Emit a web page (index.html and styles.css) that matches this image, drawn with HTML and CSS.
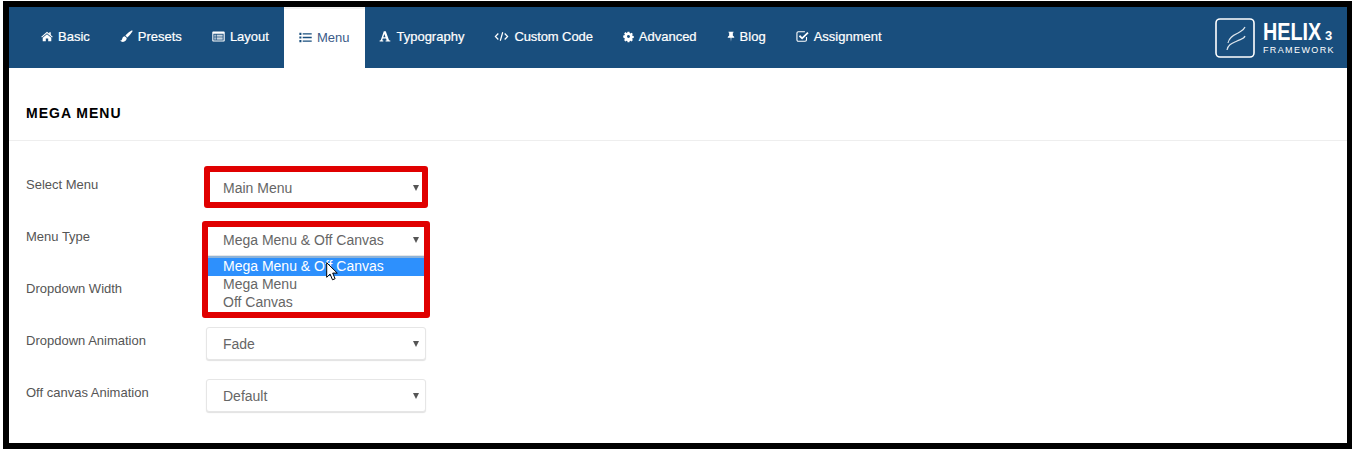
FILE: index.html
```html
<!DOCTYPE html>
<html lang="en">
<head>
    <meta charset="UTF-8">
    <meta name="viewport" content="width=device-width, initial-scale=1.0">
    <title>Helix3 Framework - Menu</title>
    <link rel="stylesheet" href="styles.css">
</head>
<body>
    <div class="frame">
        <nav class="topbar">
            <ul class="tabs">
                <li class="tab">
                    <svg class="icon icon-12" viewBox="0 0 14 14"><path d="M7 1.600 0.300 7.200l.8.900L7 3.200l5.900 4.900.8-.9-2.300-1.900V2H9.600v1.600zM2 8.400 7 4.300l5 4.100v4.100H8.400V9.200H5.600v3.300H2z"/></svg>
                    Basic
                </li>
                <li class="tab">
                    <svg class="icon" viewBox="0 0 14 14"><path d="M13.400.6c.5.500-.4 1.700-1.800 3.500C10.200 5.900 8.900 7.300 7.900 8.100L5.800 6c.8-1 2.200-2.400 4-3.800C11.600.9 13 .1 13.400.6zM5.200 6.600l2.100 2.100c-.1 2.400-1.900 4.200-4.200 4.200-1.100 0-2.300-.5-3.100-1.500 1.500 0 2.100-.6 2.400-2 .3-1.600 1.300-2.700 2.800-2.800z"/></svg>
                    Presets
                </li>
                <li class="tab">
                    <svg class="icon" viewBox="0 0 14 12"><path fill-rule="evenodd" d="M1.200.5h11.600c.5 0 .9.400.9.900v9.200c0 .5-.4.900-.9.900H1.200c-.5 0-.9-.4-.9-.9V1.400c0-.5.400-.9.900-.9zM1.500 3v7.300h11V3zM2.500 4h1.600v1.100H2.500zM5 4h6.500v1.100H5zM2.500 6h1.600v1.100H2.500zM5 6h6.500v1.100H5zM2.500 8h1.600v1.100H2.500zM5 8h6.500v1.100H5z"/></svg>
                    Layout
                </li>
                <li class="tab tab-active">
                    <svg class="icon" viewBox="0 0 14 12"><path d="M.4 1h2.200v2.200H.4zM.4 4.900h2.200v2.200H.4zM.4 8.800h2.200V11H.4zM4 1.400h9.700v1.400H4zM4 5.300h9.700v1.400H4zM4 9.200h9.700v1.400H4z"/></svg>
                    Menu
                </li>
                <li class="tab">
                    <svg class="icon icon-12" viewBox="0 0 14 14"><path d="M5.600 1h2.300l3.600 9.900c.2.600.6.800 1.700.9v1H7.700v-1c1 0 1.300-.2 1.100-.8l-.6-1.800H4.500l-.6 1.700c-.2.700.1.900 1.100.9v1H.7v-1c.9-.1 1.300-.3 1.500-.9zM6.300 4 5 7.800h2.600z"/></svg>
                    Typography
                </li>
                <li class="tab tab-tight">
                    <svg class="icon-line icon-15" viewBox="0 0 16 12"><path stroke-width="1.300" d="M4.600 2.800 1.500 6l3.100 3.200M11.400 2.800 14.500 6l-3.100 3.200M9.300 1.500 6.700 10.500"/></svg>
                    Custom Code
                </li>
                <li class="tab">
                    <svg class="icon icon-11" viewBox="0 0 14 14"><path fill-rule="evenodd" d="M5.800 1h2.400l.3 1.700 1 .4 1.400-1 1.700 1.700-1 1.400.4 1 1.700.3v2.400l-1.700.3-.4 1 1 1.400-1.700 1.700-1.400-1-1 .4-.3 1.700H5.800l-.3-1.700-1-.4-1.400 1-1.700-1.700 1-1.400-.4-1L.3 8.200V5.800L2 5.500l.4-1-1-1.400 1.700-1.700 1.400 1 1-.4zM7 5.100a1.900 1.900 0 1 0 0 3.800 1.900 1.900 0 0 0 0-3.800z"/></svg>
                    Advanced
                </li>
                <li class="tab">
                    <svg class="icon icon-8" viewBox="0 0 10 14"><path d="M1.800 1h6.400v1H7.300v4.200c1 .4 1.800 1.300 1.800 2.400H5.500L5 13.500l-.5-4.900H.9c0-1.100.8-2 1.800-2.400V2h-.9z"/></svg>
                    Blog
                </li>
                <li class="tab">
                    <svg class="icon-line" viewBox="0 0 14 14"><path stroke-width="1.200" d="M11.300 7.500v3c0 1-.6 1.600-1.600 1.600H2.600c-1 0-1.600-.6-1.600-1.600V3.500c0-1 .6-1.600 1.600-1.600h7"/><path stroke-width="1.900" d="M3.700 6.200 6.600 9l6.300-6.300"/></svg>
                    Assignment
                </li>
            </ul>
            <div class="logo">
                <svg class="logo-mark" viewBox="0 0 40 40" fill="none" stroke="#fff">
                    <rect x="1" y="1" width="38" height="38" rx="4" stroke-width="1.600"/>
                    <path stroke-width="1.200" stroke-opacity="0.85" d="M13 25c1-6 6-8 10-10 3-2 6-3 7-6"/>
                    <path stroke-width="1.200" stroke-opacity="0.85" d="M12 32c1-6 6-7 10-9 4-2 7-2 8-5"/>
                </svg>
                <div class="logo-text">
                    <div class="logo-name"><span class="logo-word">HELIX</span><span class="logo-ver">3</span></div>
                    <div class="logo-sub">FRAMEWORK</div>
                </div>
            </div>
        </nav>

        <main class="panel">
            <h1 class="panel-title">MEGA MENU</h1>
            <form class="settings">
                <div class="field">
                    <label class="field-label">Select Menu</label>
                    <div class="select-box">
                        <select class="select"><option>Main Menu</option></select>
                        <div class="mark mark-first"></div>
                    </div>
                </div>
                <div class="field">
                    <label class="field-label">Menu Type</label>
                    <div class="select-box">
                        <select class="select"><option>Mega Menu &amp; Off Canvas</option></select>
                        <ul class="options">
                            <li class="option option-on">Mega Menu &amp; Off Canvas</li>
                            <li class="option">Mega Menu</li>
                            <li class="option">Off Canvas</li>
                        </ul>
                        <div class="mark mark-second"></div>
                        <svg class="pointer" viewBox="0 0 12 19"><path d="M.7.7v14.600l3.400-3.200 2.400 5.700 2.600-1.100-2.400-5.600h4.600z" fill="#fff" stroke="#000"/></svg>
                    </div>
                </div>
                <div class="field">
                    <label class="field-label">Dropdown Width</label>
                    <div class="select-box"><input class="select" type="text"></div>
                </div>
                <div class="field">
                    <label class="field-label">Dropdown Animation</label>
                    <div class="select-box">
                        <select class="select"><option>Fade</option></select>
                    </div>
                </div>
                <div class="field">
                    <label class="field-label">Off canvas Animation</label>
                    <div class="select-box">
                        <select class="select"><option>Default</option></select>
                    </div>
                </div>
            </form>
        </main>
    </div>
</body>
</html>
```

FILE: styles.css
```css
* {
    box-sizing: border-box;
}
html, body {
    margin: 0;
    height: 449px;
    overflow: hidden;
    background: #fff;
}
body {
    font-family: "Liberation Sans", Arial, sans-serif;
    padding: 1px 0 0 3px;
}
.frame {
    height: 448px;
    border: solid #000;
    border-width: 6px 5px 6px 6px;
    background: #fff;
}
.topbar {
    display: flex;
    justify-content: space-between;
    align-items: center;
    height: 61px;
    padding: 0 12px 0 17px;
    background-color: #194e7d;
}
.tabs {
    display: flex;
    height: 100%;
    margin: 0;
    padding: 0 0 2px;
    list-style: none;
}
.tab {
    display: flex;
    align-items: center;
    gap: 5px;
    padding: 0 15px;
    color: #fff;
    font-size: 13px;
    -webkit-text-stroke: 0.2px #fff;
}
.tab-tight {
    letter-spacing: -0.1px;
}
.tab-active {
    margin: 0 -1px -2px 0;
    padding: 0 16px 2px 15px;
    background-color: #fff;
    border-top: 2px solid #f0f0f0;
    color: #3b5b88;
    -webkit-text-stroke: 0;
}
.icon,
.icon-line {
    width: 13px;
    height: 13px;
    fill: #fff;
}
.icon-line {
    fill: none;
    stroke: #fff;
}
.icon-8 {
    width: 8px;
}
.icon-11 {
    width: 11px;
}
.icon-12 {
    width: 12px;
}
.icon-15 {
    width: 15px;
}
.tab-active .icon {
    fill: #194e7d;
}
.logo {
    display: flex;
    align-items: center;
    gap: 8px;
    color: #fff;
}
.logo-mark {
    width: 40px;
    height: 40px;
}
.logo-name {
    display: flex;
    align-items: baseline;
    height: 22px;
    font-size: 23px;
    font-weight: bold;
    line-height: 22px;
}
.logo-word {
    width: 62px;
    transform: scaleX(0.86);
    transform-origin: left;
}
.logo-ver {
    font-size: 13px;
}
.logo-sub {
    margin-top: 2px;
    font-size: 9px;
    line-height: 10px;
    letter-spacing: 1.4px;
    white-space: nowrap;
}
.panel-title {
    height: 73px;
    margin: 0;
    padding: 38px 17px 0;
    border-bottom: 1px solid #eee;
    color: #000;
    font-size: 14px;
    line-height: 15px;
    letter-spacing: 1px;
}
.settings {
    display: flex;
    flex-direction: column;
    gap: 19px;
    padding: 30px 0 0 17px;
}
.field {
    display: grid;
    grid-template-columns: 180px 220px;
}
.field-label {
    padding-top: 6px;
    color: #555;
    font-size: 13px;
    line-height: 15px;
}
.select-box {
    position: relative;
    height: 33px;
}
.select-box::after {
    content: "";
    position: absolute;
    top: 14px;
    right: 7px;
    border-style: solid;
    border-width: 6px 3px 0;
    border-color: #555 transparent transparent;
}
.select {
    display: block;
    width: 100%;
    height: 33px;
    padding: 0 16px;
    border: 1px solid #e6e6e6;
    border-radius: 3px;
    background: #fff;
    box-shadow: 0 1px 1px rgba(0, 0, 0, 0.12);
    color: #666;
    font-family: inherit;
    font-size: 14px;
    appearance: none;
}
.options {
    position: absolute;
    top: 33px;
    left: 0;
    right: 0;
    z-index: 2;
    height: 56px;
    margin: 0;
    padding: 0;
    list-style: none;
    background: #fff;
    border-top: 2px solid #8db3d9;
}
.option {
    height: 18px;
    padding-left: 17px;
    color: #666;
    font-size: 14px;
    line-height: 16px;
}
.option-on {
    background-color: #2d90fd;
    color: #fff;
}
.mark {
    position: absolute;
    z-index: 3;
    border: 6px solid #e00000;
    border-radius: 3px;
    pointer-events: none;
}
.mark-first {
    top: -5px;
    left: -2px;
    right: -2px;
    bottom: -4px;
}
.mark-second {
    top: -2px;
    left: -4px;
    right: -4px;
    bottom: -62px;
}
.pointer {
    position: absolute;
    top: 39px;
    left: 120px;
    z-index: 4;
    width: 12px;
    height: 19px;
}
```
